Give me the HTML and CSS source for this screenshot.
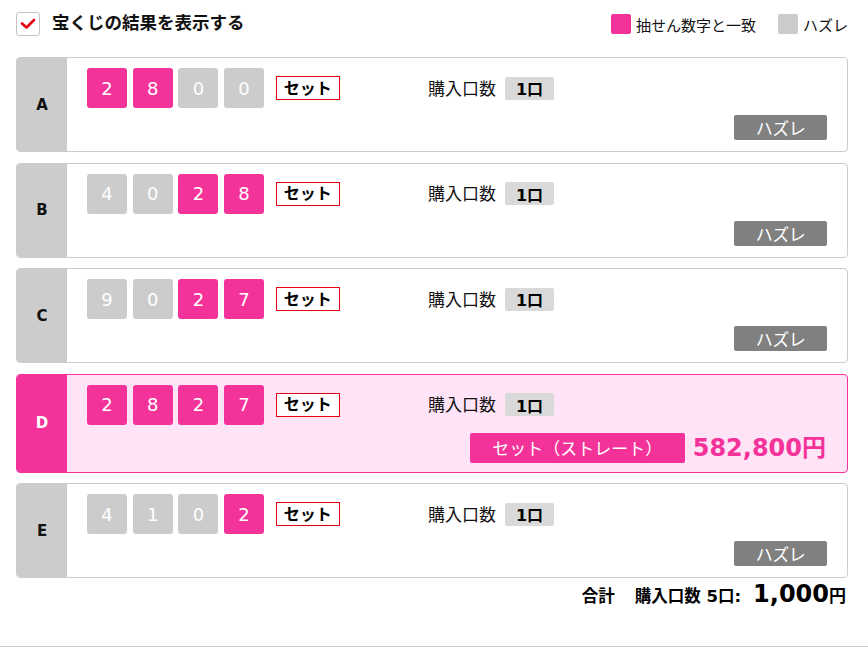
FILE: index.html
```html
<!DOCTYPE html>
<html lang="ja">
<head>
<meta charset="utf-8">
<title>宝くじの結果</title>
<link rel="stylesheet" href="styles.css">
</head>
<body>
<div class="page">
  <div class="header">
    <label class="check">
      <span class="box"><svg width="16" height="12" viewBox="0 0 16 12"><path d="M2 5.5 L6.5 9.5 L14 2" fill="none" stroke="#e60012" stroke-width="2.6" stroke-linecap="round" stroke-linejoin="round"/></svg></span>
      <span class="title">宝くじの結果を表示する</span>
    </label>
    <div class="legend">
      <span class="sw pink"></span><span class="lg-text">抽せん数字と一致</span>
      <span class="sw gray second"></span><span class="lg-text">ハズレ</span>
    </div>
  </div>

  <div class="cards">
    <div class="card">
      <div class="label">A</div>
      <div class="body">
        <div class="row1">
          <div class="nums">
            <span class="num hit">2</span><span class="num hit">8</span><span class="num">0</span><span class="num">0</span>
            <span class="set">セット</span>
          </div>
          <span class="qty-label">購入口数</span><span class="qty">1口</span>
        </div>
        <div class="row2"><span class="lose">ハズレ</span></div>
      </div>
    </div>

    <div class="card">
      <div class="label">B</div>
      <div class="body">
        <div class="row1">
          <div class="nums">
            <span class="num">4</span><span class="num">0</span><span class="num hit">2</span><span class="num hit">8</span>
            <span class="set">セット</span>
          </div>
          <span class="qty-label">購入口数</span><span class="qty">1口</span>
        </div>
        <div class="row2"><span class="lose">ハズレ</span></div>
      </div>
    </div>

    <div class="card">
      <div class="label">C</div>
      <div class="body">
        <div class="row1">
          <div class="nums">
            <span class="num">9</span><span class="num">0</span><span class="num hit">2</span><span class="num hit">7</span>
            <span class="set">セット</span>
          </div>
          <span class="qty-label">購入口数</span><span class="qty">1口</span>
        </div>
        <div class="row2"><span class="lose">ハズレ</span></div>
      </div>
    </div>

    <div class="card win">
      <div class="label">D</div>
      <div class="body">
        <div class="row1">
          <div class="nums">
            <span class="num hit">2</span><span class="num hit">8</span><span class="num hit">2</span><span class="num hit">7</span>
            <span class="set">セット</span>
          </div>
          <span class="qty-label">購入口数</span><span class="qty">1口</span>
        </div>
        <div class="row2"><span class="prize-type">セット（ストレート）</span><span class="prize">582,800円</span></div>
      </div>
    </div>

    <div class="card">
      <div class="label">E</div>
      <div class="body">
        <div class="row1">
          <div class="nums">
            <span class="num">4</span><span class="num">1</span><span class="num">0</span><span class="num hit">2</span>
            <span class="set">セット</span>
          </div>
          <span class="qty-label">購入口数</span><span class="qty">1口</span>
        </div>
        <div class="row2"><span class="lose">ハズレ</span></div>
      </div>
    </div>
  </div>

  <div class="total">
    <span class="t-label">合計</span>
    <span class="t-qty">購入口数 5口:</span>
    <span class="t-amount">1,000</span><span class="t-yen">円</span>
  </div>
</div>
</body>
</html>
```

FILE: styles.css
```css
* { box-sizing: border-box; }
html, body { margin: 0; padding: 0; background: #fff; }
body {
  font-family: "DejaVu Sans", "Noto Sans CJK JP", sans-serif;
  color: #111;
}
.page {
  width: 868px;
  height: 647px;
  padding: 12px 20px 0 16px;
  border-bottom: 1px solid #ccc;
}
.header {
  display: flex;
  align-items: center;
  justify-content: space-between;
  height: 24px;
}
.check { display: flex; align-items: center; }
.box {
  width: 24px; height: 24px;
  border: 1px solid #c4c4c4;
  border-radius: 3px;
  background: #fff;
  display: flex; align-items: center; justify-content: center;
}
.title {
  margin-left: 12px;
  font-family: "Noto Sans CJK JP", sans-serif;
  font-weight: 700;
  font-size: 17.5px;
  line-height: 24px;
  margin-top: -4px;
}
.legend { display: flex; align-items: center; }
.sw { width: 20px; height: 20px; border-radius: 2px; }
.sw.pink { background: #f4339a; }
.sw.gray { background: #ccc; }
.sw.second { margin-left: 22px; }
.lg-text {
  margin-left: 5px;
  font-family: "Noto Sans CJK JP", sans-serif;
  font-size: 15px;
}

.cards {
  margin-top: 21px;
  display: flex;
  flex-direction: column;
  gap: 10.5px;
}
.card {
  display: flex;
  border: 1px solid #ccc;
  border-radius: 4px;
  overflow: hidden;
  background: #fff;
}
.label {
  width: 50px;
  flex: none;
  background: #ccc;
  display: flex;
  align-items: center;
  justify-content: center;
  font-weight: 700;
  font-size: 15px;
}
.body {
  flex: 1;
  padding: 10px 20px 11px 20px;
}
.row1 { display: flex; align-items: center; height: 40px; }
.nums { width: 341px; flex: none; display: flex; align-items: center; }
.num {
  width: 40px; height: 40px;
  margin-right: 5.7px;
  border-radius: 3px;
  background: #ccc;
  color: #fff;
  font-size: 18px;
  display: flex; align-items: center; justify-content: center;
}
.num.hit { background: #f4339a; }
.set {
  margin-left: 6px;
  width: 64px; height: 24px;
  border: 1px solid #e60012;
  background: #fff;
  font-family: "Noto Sans CJK JP", sans-serif;
  font-weight: 700;
  font-size: 16px;
  line-height: 20px;
  padding-bottom: 3px;
  display: flex; align-items: center; justify-content: center;
  color: #000;
}
.qty-label {
  font-family: "Noto Sans CJK JP", sans-serif;
  font-size: 17px;
  color: #111;
  margin-top: -2px;
}
.qty {
  margin-left: 9px;
  width: 49px; height: 23px;
  background: #d9d9d9;
  border-radius: 2px;
  font-weight: 700;
  font-size: 16px;
  display: flex; align-items: center; justify-content: center;
  color: #000;
}
.row2 {
  margin-top: 7px;
  display: flex;
  justify-content: flex-end;
  align-items: center;
}
.lose {
  width: 93px; height: 25px;
  background: #808080;
  border-radius: 2px;
  color: #fff;
  font-family: "Noto Sans CJK JP", sans-serif;
  font-size: 17px;
  letter-spacing: -0.5px;
  display: flex; align-items: center; justify-content: center;
}
.card.win { border-color: #f4339a; background: #ffe4f7; }
.card.win .label { background: #f4339a; color: #fff; }
.card.win .body { padding-bottom: 9px; }
.card.win .row2 { margin-top: 8px; margin-right: 1px; }
.prize-type {
  width: 215px; height: 30px;
  background: #f4339a;
  border-radius: 2px;
  color: #fff;
  font-family: "Noto Sans CJK JP", sans-serif;
  font-size: 17px;
  display: flex; align-items: center; justify-content: center;
}
.prize {
  margin-left: 8px;
  color: #f4339a;
  font-weight: 700;
  font-size: 24px;
  line-height: 30px;
}
.total {
  display: flex;
  justify-content: flex-end;
  align-items: baseline;
  margin-top: 2px;
  padding-right: 2px;
  font-weight: 700;
  color: #000;
}
.t-label { font-size: 16.5px; font-family: "Noto Sans CJK JP", sans-serif; }
.t-qty { font-size: 16.5px; margin-left: 20px; }
.t-amount { font-size: 24px; margin-left: 12px; }
.t-yen { font-size: 17px; font-family: "Noto Sans CJK JP", sans-serif; }
```
